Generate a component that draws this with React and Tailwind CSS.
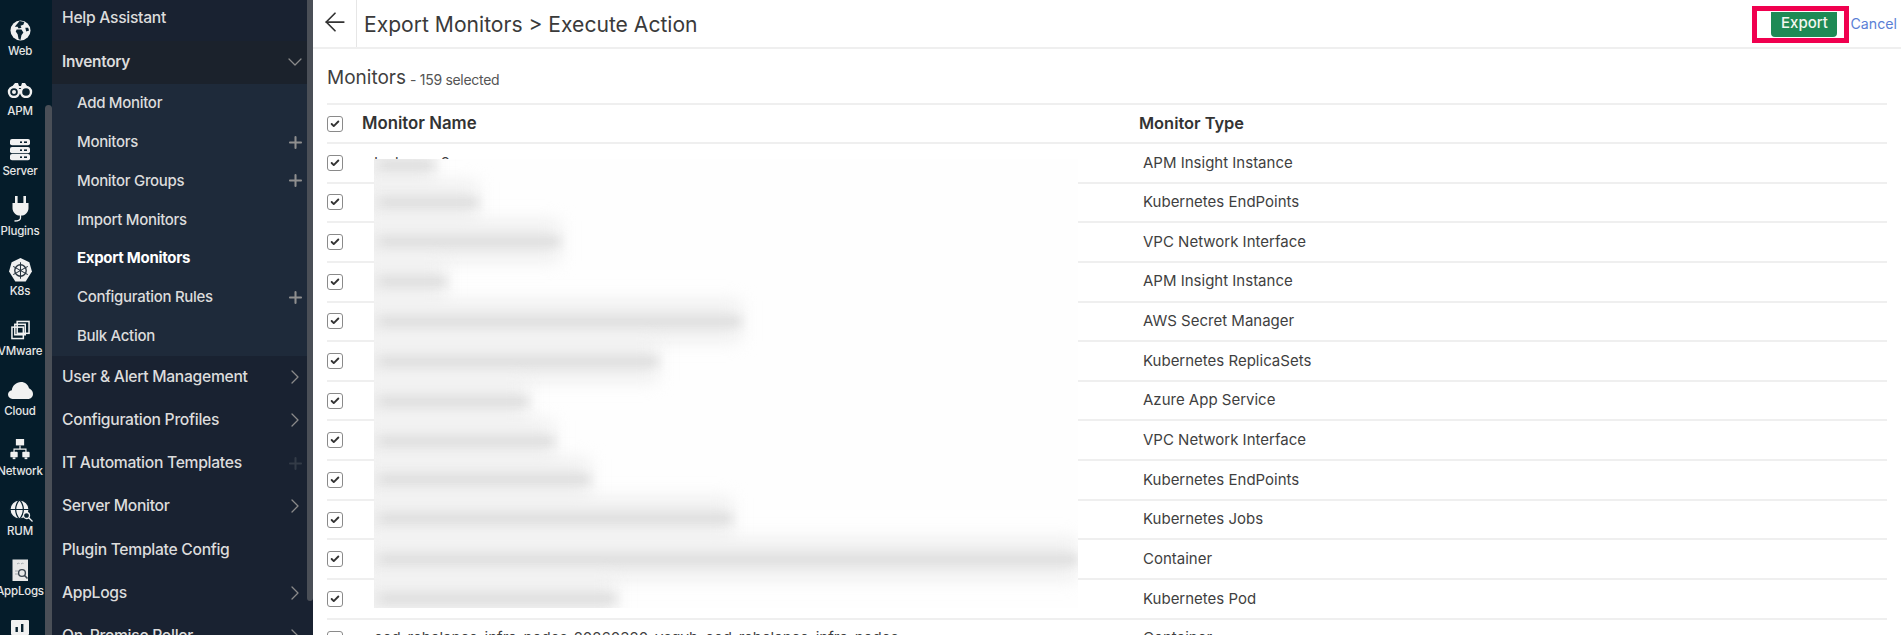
import { ChevronDown, ChevronRight, Plus, ArrowLeft, Check, Globe } from "lucide-react";

const rail = [
  { label: "Web", icon: <WebIcon /> },
  { label: "APM", icon: <ApmIcon /> },
  { label: "Server", icon: <ServerIcon /> },
  { label: "Plugins", icon: <PlugIcon /> },
  { label: "K8s", icon: <K8sIcon /> },
  { label: "VMware", icon: <VmIcon /> },
  { label: "Cloud", icon: <CloudIcon /> },
  { label: "Network", icon: <NetworkIcon /> },
  { label: "RUM", icon: <RumIcon /> },
  { label: "AppLogs", icon: <LogsIcon /> },
];

const subItems = [
  { label: "Add Monitor" },
  { label: "Monitors", plus: true },
  { label: "Monitor Groups", plus: true },
  { label: "Import Monitors" },
  { label: "Export Monitors", active: true },
  { label: "Configuration Rules", plus: true },
  { label: "Bulk Action" },
];

const lowerItems = [
  { label: "User & Alert Management", arrow: true },
  { label: "Configuration Profiles", arrow: true },
  { label: "IT Automation Templates", dimPlus: true },
  { label: "Server Monitor", arrow: true },
  { label: "Plugin Template Config" },
  { label: "AppLogs", arrow: true },
  { label: "On-Premise Poller", arrow: true },
];

const rows = [
  ["Instance-2", "APM Insight Instance"],
  ["", "Kubernetes EndPoints"],
  ["", "VPC Network Interface"],
  ["", "APM Insight Instance"],
  ["", "AWS Secret Manager"],
  ["", "Kubernetes ReplicaSets"],
  ["", "Azure App Service"],
  ["", "VPC Network Interface"],
  ["", "Kubernetes EndPoints"],
  ["", "Kubernetes Jobs"],
  ["", "Container"],
  ["", "Kubernetes Pod"],
  ["eed-rebalance-infra-nodes-20260320-ysqyb-eed-rebalance-infra-nodes", "Container"],
];

// redacted names: [centre y inside the patch, right end of the text]
const smudges = [
  [6, 60],
  [43, 104],
  [82, 186],
  [122, 72],
  [162, 367],
  [202, 284],
  [242, 154],
  [282, 180],
  [320, 216],
  [359, 358],
  [400, 704],
  [439, 242],
];

function WebIcon() {
  return (
    <svg width="21" height="21" viewBox="0 0 22 22">
      <circle cx="11" cy="11" r="10.5" fill="#f1f1f1" />
      <path d="M10 1l5 1-1 3-3 1 1 2-3 1-1-2-3 0zM7 10l5 0 2 3-2 3-1 5-2-1-1-5-2-3zM16 8l3 0 1 3-3 1z" fill="#0a2230" />
    </svg>
  );
}

function ApmIcon() {
  return (
    <svg width="26" height="16" viewBox="0 0 26 16">
      <path d="M8 1h3l1 3h2l1-3h3l4 6-3 0-5-1h-3l-5 1-3 0z" fill="#f1f1f1" />
      <circle cx="7" cy="10" r="5" fill="#0a2230" stroke="#f1f1f1" strokeWidth="2.4" />
      <circle cx="19" cy="10" r="5" fill="#0a2230" stroke="#f1f1f1" strokeWidth="2.4" />
      <circle cx="7" cy="10" r="2" fill="#f1f1f1" />
      <rect x="11.5" y="7" width="3" height="4" fill="#f1f1f1" />
    </svg>
  );
}

function ServerIcon() {
  return (
    <svg width="20" height="22" viewBox="0 0 20 22">
      {[0, 8, 15].map((y) => (
        <g key={y}>
          <rect x="0" y={y} width="20" height="6.2" rx="2" fill="#f1f1f1" />
          <rect x="10" y={y + 2.4} width="2" height="1.6" fill="#0a2230" />
          <rect x="14" y={y + 2.4} width="3" height="1.6" fill="#0a2230" />
        </g>
      ))}
    </svg>
  );
}

function PlugIcon() {
  return (
    <svg width="17" height="28" viewBox="0 0 17 28">
      <rect x="3" y="0" width="2.6" height="8" fill="#f1f1f1" />
      <rect x="11.4" y="0" width="2.6" height="8" fill="#f1f1f1" />
      <path d="M0.5 7h16v5c0 4-3 7-6 7.5h-4C3.5 19 0.5 16 0.5 12z" fill="#f1f1f1" />
      <path d="M8.5 19v3c0 2-3 3-6 3" fill="none" stroke="#f1f1f1" strokeWidth="1.3" />
    </svg>
  );
}

function K8sIcon() {
  return (
    <svg width="25" height="25" viewBox="0 0 24 24">
      <path d="M12 0l8.5 4 2.5 9-6 9.5H7L1 13l2.5-9z" fill="#f1f1f1" />
      <circle cx="12" cy="12" r="5.5" fill="none" stroke="#27343f" strokeWidth="1.3" />
      <path d="M12 4v16M5 8l14 8M19 8L5 16" stroke="#27343f" strokeWidth="1" />
    </svg>
  );
}

function VmIcon() {
  return (
    <svg width="19" height="20" viewBox="0 0 20 20" fill="none" stroke="#f1f1f1" strokeWidth="1.6">
      <rect x="6.5" y="1" width="12.5" height="12.5" />
      <rect x="4" y="4" width="11" height="11" />
      <rect x="1" y="7" width="12" height="12" />
    </svg>
  );
}

function CloudIcon() {
  return (
    <svg width="25" height="17" viewBox="0 0 25 17">
      <path d="M4.5 17C2 17 0 15 0 12.6 0 10.4 1.6 8.7 3.8 8.3 4.4 3.6 8.2 0 13 0c4 0 7.2 2.6 8 6.3 2.2 1 4 3 4 5.7 0 2.8-2.2 5-5 5z" fill="#f1f1f1" />
    </svg>
  );
}

function NetworkIcon() {
  return (
    <svg width="22" height="22" viewBox="0 0 22 24">
      <rect x="6.5" y="0" width="9" height="7" fill="#f1f1f1" />
      <path d="M11 7v4M4.5 15v-4h13v4" fill="none" stroke="#f1f1f1" strokeWidth="1.3" />
      <rect x="0.5" y="14" width="8" height="6" rx="1" fill="#f1f1f1" />
      <rect x="13.5" y="14" width="8" height="6" rx="1" fill="#f1f1f1" />
      <rect x="3" y="20" width="3" height="2" fill="#f1f1f1" />
      <rect x="16" y="20" width="3" height="2" fill="#f1f1f1" />
    </svg>
  );
}

function RumIcon() {
  return (
    <div className="relative h-[24px] w-[24px]">
      <Globe size={23} fill="#f1f1f1" stroke="#0a2230" strokeWidth={1.3} />
      <svg className="absolute bottom-0 right-[-1px]" width="11" height="11" viewBox="0 0 11 11" fill="none" stroke="#f1f1f1" strokeWidth="1.3">
        <circle cx="4.5" cy="4.5" r="3" fill="#0a2230" />
        <path d="M7 7l3.5 3.5" />
      </svg>
    </div>
  );
}

function LogsIcon() {
  return (
    <svg width="17" height="23" viewBox="0 0 17 23">
      <rect x="0.5" y="0.5" width="15.5" height="21.5" fill="#e8e8e8" />
      <path d="M5 5l1.5-1 1 1M9 5l1.5-1 1 1M3 12h3M3 15h3" stroke="#9aa0a6" strokeWidth="0.9" fill="none" />
      <circle cx="10" cy="14" r="3.4" fill="#e8e8e8" stroke="#3b4650" strokeWidth="1.4" />
      <path d="M12.5 16.5l3 3" stroke="#3b4650" strokeWidth="1.6" />
    </svg>
  );
}

function PollerIcon() {
  return (
    <svg width="20" height="22" viewBox="0 0 20 22">
      <rect x="1" y="1" width="18" height="15" rx="1" fill="#f1f1f1" />
      <rect x="5.5" y="8" width="2.4" height="5" fill="#0a2230" />
      <rect x="11" y="5" width="2.4" height="8" fill="#0a2230" />
      <path d="M8 21l2-5 2 5" fill="none" stroke="#f1f1f1" strokeWidth="1.4" />
    </svg>
  );
}

function Box({ checked = true }) {
  return (
    <span className="flex h-[16px] w-[16px] shrink-0 items-center justify-center rounded-[3px] border-[1.5px] border-[#8a8a8a] bg-white">
      {checked && <Check size={10} strokeWidth={4.5} className="text-[#333]" />}
    </span>
  );
}

function App() {
  return (
    <div
      className="flex h-[635px] w-[1901px] overflow-hidden bg-white"
      style={{ fontFamily: "Inter, 'Liberation Sans', sans-serif" }}
    >
      <div className="relative flex w-[52px] shrink-0 bg-[#051c2a]">
        <div className="flex w-[40px] shrink-0 flex-col items-center pt-[18px]">
          {rail.map((r) => (
            <div key={r.label} className="flex h-[60px] w-[40px] shrink-0 flex-col items-center">
              <div className="flex h-[24px] items-center justify-center">{r.icon}</div>
              <span className="mt-[1px] whitespace-nowrap text-[11.5px] font-medium tracking-[-0.2px] text-[#e6e6e6]">
                {r.label}
              </span>
            </div>
          ))}
          <div className="flex h-[24px] shrink-0 items-center justify-center">
            <PollerIcon />
          </div>
        </div>
        <div className="absolute bottom-0 left-[45px] top-[105px] w-[7px] rounded-t-[4px] bg-[#4a4f57]" />
      </div>

      <div className="flex w-[255px] shrink-0 flex-col overflow-hidden bg-[#192231] font-medium tracking-[-0.3px] text-[#dcdcdc]">
        <div className="flex h-[41px] shrink-0 items-center pb-[5px] pl-[10px] text-[15.7px]">Help Assistant</div>
        <div className="flex h-[43px] shrink-0 items-center justify-between bg-[#1b222c] pb-[1px] pl-[10px] text-[15.4px] font-semibold">
          Inventory
          <ChevronDown size={24} strokeWidth={1.3} className="text-[#8a8a8a]" />
        </div>
        <div className="shrink-0 bg-[#1e2a3a] text-[15px]">
          {subItems.map((s) => (
            <div
              key={s.label}
              className={`flex h-[38.8px] items-center justify-between pl-[25px] pr-[2px] ${s.active ? "font-bold text-white" : ""}`}
            >
              {s.label}
              {s.plus && <Plus size={19} strokeWidth={2.6} className="text-[#8f8f8f]" />}
            </div>
          ))}
        </div>
        {lowerItems.map((s) => (
          <div key={s.label} className="flex h-[43.2px] shrink-0 items-center justify-between pb-[1px] pl-[10px] text-[15.7px]">
            {s.label}
            {s.arrow && <ChevronRight size={24} strokeWidth={1.3} className="text-[#8a8a8a]" />}
            {s.dimPlus && <Plus size={19} strokeWidth={2.6} className="mr-[2px] text-[#333b47]" />}
          </div>
        ))}
      </div>

      <div className="w-[6px] shrink-0 bg-[#192231]">
        <div className="h-[601px] rounded-b-[4px] bg-[#4a4f57]" />
      </div>

      <div className="relative min-w-0 flex-1">
        <div className="flex h-[49px] items-center border-b-2 border-[#efefef]">
          <div className="flex h-[47px] w-[44px] shrink-0 items-center justify-center border-r border-[#e6e6e6] pb-[3px]">
            <ArrowLeft size={30} strokeWidth={1.4} className="text-[#333]" />
          </div>
          <h1 className="ml-[7px] pt-[3px] text-[21.1px] font-normal text-[#3a3a3a]">Export Monitors &gt; Execute Action</h1>
          <div className="ml-auto flex items-center">
            <div className="mt-[2px] flex h-[37px] w-[97px] items-end justify-end border-[5px] border-[#f0004f] bg-white pb-[1px] pr-[7px]">
              <button className="h-[25px] w-[66px] rounded-b-[4px] bg-[#1e8a55] pb-[3px] text-[15px] font-medium text-[#f2f7f0]">
                Export
              </button>
            </div>
            <a className="ml-[1px] mr-[4px] mt-[1px] text-[14.2px] text-[#5b7fd6]">Cancel</a>
          </div>
        </div>

        <div className="px-[14px]">
          <div className="flex h-[54px] items-center pt-[5px] text-[#3f3f3f]">
            <span className="text-[19px]">Monitors</span>
            <span className="ml-[4px] mt-[2px] text-[14px] tracking-[-0.3px] text-[#555]">- 159 selected</span>
          </div>
          <div className="flex h-[41px] items-center border-y-2 border-[#efefef] font-semibold text-[#333]">
            <Box />
            <span className="ml-[19px] w-[776px] text-[16.8px]">Monitor Name</span>
            <span className="ml-[1px] text-[16.4px]">Monitor Type</span>
          </div>
          {rows.map(([name, type], i) => (
            <div key={i} className="flex h-[39.65px] items-center border-b-2 border-[#efefef] text-[15px] text-[#3f3f3f]">
              <Box checked={i < 12} />
              <span className="ml-[31px] w-[769px] whitespace-nowrap">{name}</span>
              <span>{type}</span>
            </div>
          ))}
        </div>

        <div className="absolute left-[61px] top-[159px] h-[449px] w-[704px] overflow-hidden bg-[#fefefe]">
          {smudges.map(([y, end], i) => (
            <div key={i}>
              <div
                className="absolute left-[-14px] h-[40px] bg-[#eeeeee] blur-[9px]"
                style={{ top: y - 20, width: end + 14 }}
              />
              <div
                className="absolute left-[6px] h-[9px] bg-[#dddddd] blur-[5px]"
                style={{ top: y - 4, width: end - 6 }}
              />
            </div>
          ))}
        </div>
      </div>
    </div>
  );
}

export default App;
